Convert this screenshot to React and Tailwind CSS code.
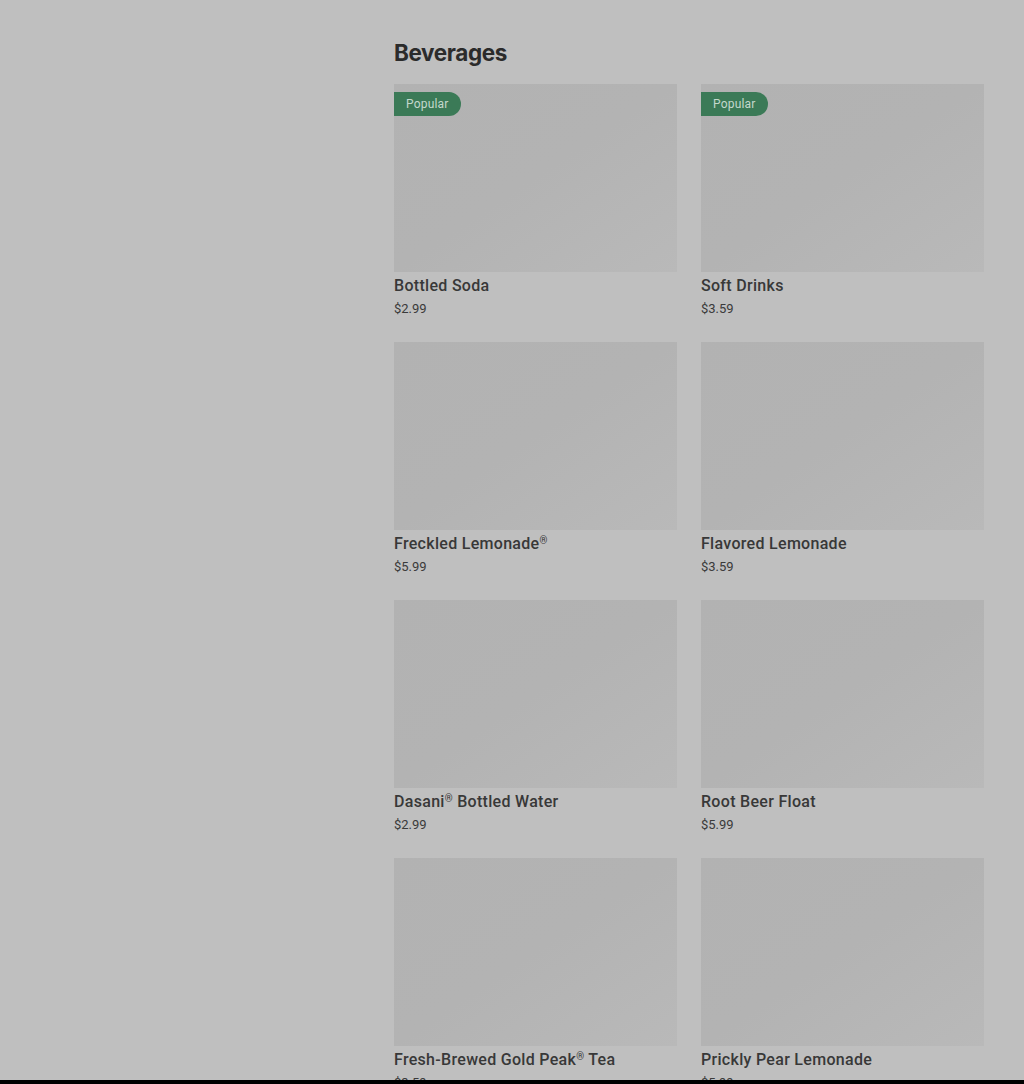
const items = [
  { name: 'Bottled Soda', price: '$2.99', popular: true },
  { name: 'Soft Drinks', price: '$3.59', popular: true },
  { name: 'Freckled Lemonade®', price: '$5.99' },
  { name: 'Flavored Lemonade', price: '$3.59' },
  { name: 'Dasani® Bottled Water', price: '$2.99' },
  { name: 'Root Beer Float', price: '$5.99' },
  { name: 'Fresh-Brewed Gold Peak® Tea', price: '$3.59' },
  { name: 'Prickly Pear Lemonade', price: '$5.99' },
]

// small raised ® like the menu shows
const renderName = (name) =>
  name.split('®').flatMap((part, i, arr) =>
    i < arr.length - 1
      ? [part, <span key={i} className="relative -top-[5px] text-[10px] leading-none">®</span>]
      : [part]
  )

const MenuCard = ({ name, price, popular }) => (
  <div className="flex flex-col">
    <div className="relative h-[188px] w-full bg-gradient-to-br from-[#b2b2b2] via-[#b3b3b3] to-[#b9b9b9]">
      {popular && (
        <span className="absolute left-0 top-2 flex h-6 items-center rounded-r-full bg-[#3b7a57] pl-3 pr-3 text-[12px] tracking-[0.2px] text-[#c4d8cc]">
          Popular
        </span>
      )}
    </div>
    <div className="h-[26px] pt-[2px] text-[16px] font-medium leading-6 tracking-[0.3px] text-[#383838]">
      {renderName(name)}
    </div>
    <div className="pt-px text-[13px] leading-5 text-[#3a3a3a]">{price}</div>
  </div>
)

export default function App() {
  return (
    <div
      className="relative h-[1084px] overflow-hidden bg-[#bfbfbf]"
      style={{ fontFamily: '"Roboto", "Liberation Sans", sans-serif' }}
    >
      <div className="flex">
        <aside className="w-[354px] shrink-0" />
        <main className="flex-1 px-10 pt-[40px]">
          <h2
            className="mb-[18px] text-[22.5px] font-bold leading-[26px] tracking-[-0.4px] text-[#2b2b2b]"
            style={{ fontFamily: 'Inter, "Liberation Sans", sans-serif' }}
          >
            Beverages
          </h2>
          <div className="grid grid-cols-2 gap-x-6 gap-y-[23px]">
            {items.map((item) => (
              <MenuCard key={item.name} {...item} />
            ))}
          </div>
        </main>
      </div>
      <div className="absolute bottom-0 left-0 right-0 h-1 bg-black" />
    </div>
  )
}
